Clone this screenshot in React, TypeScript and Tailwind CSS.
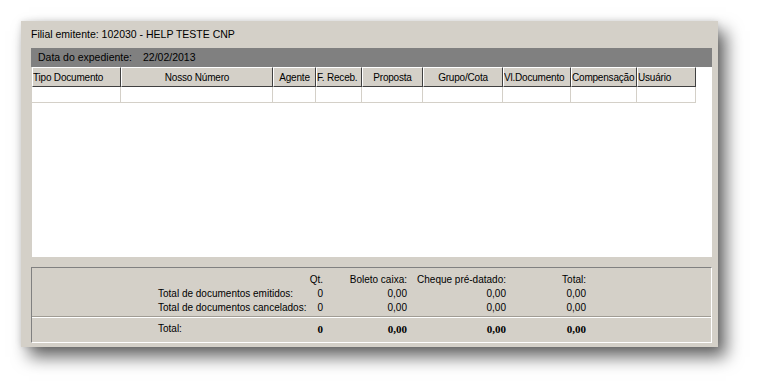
import React from 'react';

const cols = [
  { label: 'Tipo Documento', w: 'w-[89px]', align: 'text-left' },
  { label: 'Nosso Número', w: 'w-[152px]', align: 'text-center' },
  { label: 'Agente', w: 'w-[43px]', align: 'text-center' },
  { label: 'F. Receb.', w: 'w-[46px]', align: 'text-left' },
  { label: 'Proposta', w: 'w-[61px]', align: 'text-center' },
  { label: 'Grupo/Cota', w: 'w-[80px]', align: 'text-center' },
  { label: 'Vl.Documento', w: 'w-[68px]', align: 'text-left' },
  { label: 'Compensação', w: 'w-[66px]', align: 'text-left' },
  { label: 'Usuário', w: 'w-[59px]', align: 'text-left' },
];

const rows = [
  { label: 'Total de documentos emitidos:', qt: '0', boleto: '0,00', cheque: '0,00', total: '0,00' },
  { label: 'Total de documentos cancelados:', qt: '0', boleto: '0,00', cheque: '0,00', total: '0,00' },
];

function SummaryRow({ r, bold }: { r: typeof rows[0]; bold?: boolean }) {
  const b = bold ? "font-bold font-['Liberation_Serif',serif] text-[11px]" : '';
  return (
    <div className="flex h-[14px] items-center leading-[14px] whitespace-nowrap">
      <div className="w-[142px] shrink-0">{r.label}</div>
      <div className={`w-[23px] shrink-0 text-right ${b}`}>{r.qt}</div>
      <div className={`w-[84px] shrink-0 text-right ${b}`}>{r.boleto}</div>
      <div className={`w-[99px] shrink-0 text-right ${b}`}>{r.cheque}</div>
      <div className={`w-[80px] shrink-0 text-right ${b}`}>{r.total}</div>
    </div>
  );
}

export default function App() {
  return (
    <div className="w-[760px] h-[389px] bg-white pt-[21px] pl-[21px] font-['Liberation_Sans',Arial,sans-serif] text-[10px] text-black">
      <div className="w-[697px] h-[326px] bg-[#d4d0c8] pl-[10px] shadow-[0_0_6px_rgba(0,0,0,0.12),8px_10px_16px_rgba(0,0,0,0.6)]">
        <div className="h-[27px] pt-[7px] leading-[12px] text-[10.5px]">Filial emitente: 102030 - HELP TESTE CNP</div>

        <div className="w-[681px] h-[19px] bg-[#808080] flex items-center pl-[7px] text-[10.5px]">
          <span>Data do expediente:</span>
          <span className="ml-[11px]">22/02/2013</span>
        </div>

        <div className="ml-[1px] w-[680px] h-[190px] bg-white">
          <div className="flex h-[20px]">
            {cols.map((c) => (
              <div
                key={c.label}
                className={`${c.w} ${c.align} shrink-0 h-[20px] bg-[#d4d0c8] border-t border-l border-t-white border-l-white border-r border-b border-r-[#404040] border-b-[#404040] leading-[20px] tracking-[-0.2px] whitespace-nowrap overflow-hidden`}
              >
                {c.label}
              </div>
            ))}
          </div>
          <div className="flex h-[16px]">
            {cols.map((c) => (
              <div key={c.label} className={`${c.w} shrink-0 border-r border-b border-[#d4d0c8]`} />
            ))}
          </div>
        </div>

        <div className="mt-[10px] w-[681px] h-[76px] border-t border-l border-t-[#808080] border-l-[#808080] border-r border-b border-r-white border-b-white">
          <div className="pt-[5px] pl-[126px]">
            <SummaryRow r={{ label: '', qt: 'Qt.', boleto: 'Boleto caixa:', cheque: 'Cheque pré-datado:', total: 'Total:' }} />
            {rows.map((r) => (
              <SummaryRow key={r.label} r={r} />
            ))}
          </div>
          <div className="h-[2px] mt-[1px] border-t border-t-[#a09c94] border-b border-b-white" />
          <div className="pt-[4px] pl-[126px]">
            <SummaryRow bold r={{ label: 'Total:', qt: '0', boleto: '0,00', cheque: '0,00', total: '0,00' }} />
          </div>
        </div>
      </div>
    </div>
  );
}
